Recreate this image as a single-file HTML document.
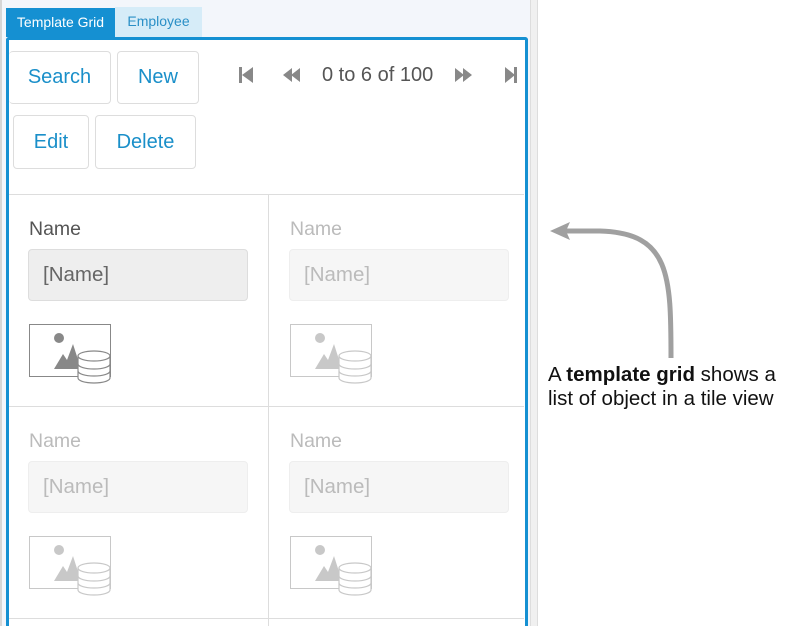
<!DOCTYPE html>
<html style="overflow:hidden;height:626px"><head><style>
body{margin:0;width:798px;height:626px;background:#fff;position:relative;overflow:hidden;font-family:"Liberation Sans",sans-serif}
.a{position:absolute}
.btn{position:absolute;border:1px solid #ddd;border-radius:4px;background:#fff;color:#1a8fc9;font-size:20px;display:flex;align-items:center;justify-content:center;box-sizing:border-box}
.lbl{position:absolute;font-size:19.5px;color:#555}
.inp{position:absolute;width:220px;height:52px;box-sizing:border-box;border:1px solid #ddd;border-radius:4px;background:#eee;color:#666;font-size:20.5px;padding:13px 0 0 14px}
.f .lbl{color:#bbb}.f .inp{background:#f6f6f6;border-color:#eee;color:#bbb}
</style></head><body>
<div class="a" style="left:0;top:0;width:530px;height:626px;background:#f3f6fb;border-left:2px solid #d6d6d6;box-sizing:border-box"></div>
<div class="a" style="left:530px;top:0;width:8px;height:626px;background:#f0f0f0;border-left:1px solid #ddd;border-right:1px solid #ddd;box-sizing:border-box"></div>
<div class="a" style="left:6px;top:8px;width:109px;height:29px;background:#1590d2;color:#fff;font-size:14px;line-height:29px;text-align:center">Template Grid</div>
<div class="a" style="left:115px;top:7px;width:87px;height:30px;background:#d6ecf8;color:#2a8fc6;font-size:14px;line-height:29px;text-align:center">Employee</div>
<div class="a" style="left:6px;top:37px;width:522px;height:589px;border:3px solid #1590d2;border-bottom:none;border-radius:3px 3px 0 0;background:#fff;box-sizing:border-box"></div>
<div class="btn" style="left:9px;top:51px;width:102px;height:53px;border-left:none">Search</div>
<div class="btn" style="left:117px;top:51px;width:82px;height:53px">New</div>
<div class="btn" style="left:13px;top:115px;width:76px;height:54px">Edit</div>
<div class="btn" style="left:95px;top:115px;width:101px;height:54px">Delete</div>
<svg class="a" style="left:238px;top:65px" width="290" height="22" viewBox="0 0 290 22">
<g fill="#888"><rect x="1" y="2" width="3" height="16"/><path d="M15 2 L4 10 L15 18Z"/>
<path d="M54 3 L45 10 L54 17Z M62 3 L53 10 L62 17Z"/>
<path d="M217 3 L226 10 L217 17Z M225 3 L234 10 L225 17Z"/>
<path d="M267 2 L277 10 L267 18Z"/><rect x="276" y="2" width="3" height="16"/></g></svg>
<div class="a" style="left:322px;top:64px;font-size:20px;color:#555">0 to 6 of 100</div>
<div class="a" style="left:9px;top:194px;width:515px;height:1px;background:#ddd"></div>
<div class="a" style="left:9px;top:406px;width:515px;height:1px;background:#ddd"></div>
<div class="a" style="left:9px;top:618px;width:515px;height:1px;background:#ddd"></div>
<div class="a" style="left:268px;top:195px;width:1px;height:431px;background:#ddd"></div>
<svg width="0" height="0" style="position:absolute"><defs><g id="ic">
<rect x="0.5" y="0.5" width="81" height="52" fill="#fff" stroke="currentColor"/>
<circle cx="30" cy="14" r="5" fill="currentColor"/>
<path d="M25 45 L34 30 L38 36 L44 20 L52 45Z" fill="currentColor"/>
<g fill="#fff" stroke="currentColor" stroke-width="1.2"><path d="M49 32 v22 a16 5 0 0 0 32 0 v-22"/>
<path d="M49 40 a16 5 0 0 0 32 0 M49 47 a16 5 0 0 0 32 0"/><ellipse cx="65" cy="32" rx="16" ry="5"/></g>
</g></defs></svg>
<div><div class="lbl" style="left:29px;top:218px">Name</div><div class="inp" style="left:28px;top:249px">[Name]</div>
<svg class="a" style="left:29px;top:324px;color:#888" width="84" height="62"><use href="#ic"/></svg></div>
<div class="f"><div class="lbl" style="left:290px;top:218px">Name</div><div class="inp" style="left:289px;top:249px">[Name]</div>
<svg class="a" style="left:290px;top:324px;color:#c8c8c8" width="84" height="62"><use href="#ic"/></svg></div>
<div class="f"><div class="lbl" style="left:29px;top:430px">Name</div><div class="inp" style="left:28px;top:461px">[Name]</div>
<svg class="a" style="left:29px;top:536px;color:#c8c8c8" width="84" height="62"><use href="#ic"/></svg></div>
<div class="f"><div class="lbl" style="left:290px;top:430px">Name</div><div class="inp" style="left:289px;top:461px">[Name]</div>
<svg class="a" style="left:290px;top:536px;color:#c8c8c8" width="84" height="62"><use href="#ic"/></svg></div>
<svg class="a" style="left:540px;top:215px" width="150" height="150">
<path d="M131 143 C131 60 130 18 60 16 L25 16" fill="none" stroke="#a0a0a0" stroke-width="5"/>
<path d="M10 16 L30 7 L26 16 L30 25Z" fill="#a0a0a0"/></svg>
<div class="a" style="left:548px;top:363px;font-size:20.5px;line-height:24px;color:#111;white-space:nowrap">A <b>template grid</b> shows a<br>list of object in a tile view</div>
</body></html>
